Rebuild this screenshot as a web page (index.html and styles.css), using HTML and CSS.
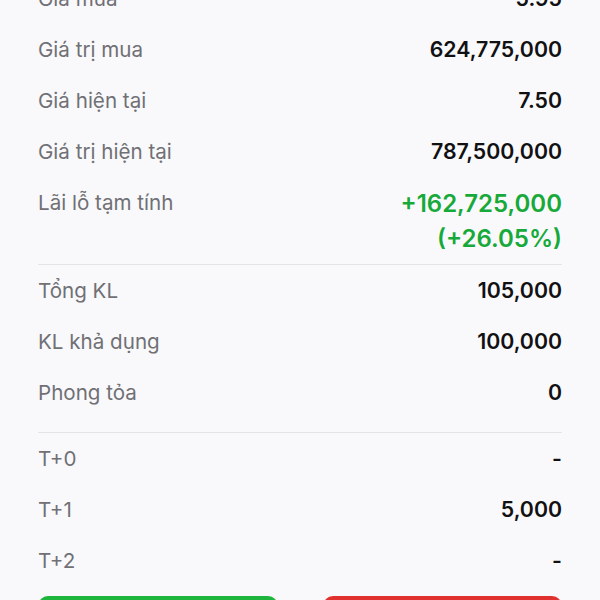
FILE: index.html
```html
<html>
  <head>
    <title>Chi tiết tài sản</title>
    <meta charset="utf-8" />
    <meta name="viewport" content="width=device-width" />
    <link rel="stylesheet" href="styles.css">
  </head>
  <body>
    <main class="detail">
      <section class="group group-top">
        <div class="row">
          <span class="label">Giá mua</span>
          <span class="value">5.95</span>
        </div>
        <div class="row">
          <span class="label">Giá trị mua</span>
          <span class="value">624,775,000</span>
        </div>
        <div class="row">
          <span class="label">Giá hiện tại</span>
          <span class="value">7.50</span>
        </div>
        <div class="row">
          <span class="label">Giá trị hiện tại</span>
          <span class="value">787,500,000</span>
        </div>
        <div class="row row-pnl">
          <span class="label">Lãi lỗ tạm tính</span>
          <span class="value value-up">+162,725,000<br />(+26.05%)</span>
        </div>
      </section>

      <hr class="divider" />

      <section class="group group-volume">
        <div class="row">
          <span class="label">Tổng KL</span>
          <span class="value">105,000</span>
        </div>
        <div class="row">
          <span class="label">KL khả dụng</span>
          <span class="value">100,000</span>
        </div>
        <div class="row">
          <span class="label">Phong tỏa</span>
          <span class="value">0</span>
        </div>
      </section>

      <hr class="divider" />

      <section class="group">
        <div class="row">
          <span class="label">T+0</span>
          <span class="value">-</span>
        </div>
        <div class="row">
          <span class="label">T+1</span>
          <span class="value">5,000</span>
        </div>
        <div class="row">
          <span class="label">T+2</span>
          <span class="value">-</span>
        </div>
      </section>

      <div class="actions">
        <button class="btn btn-buy">Mua</button>
        <button class="btn btn-sell">Bán</button>
      </div>
    </main>
  </body>
</html>
```

FILE: styles.css
```css
body {
  margin: 0;
  background: #f9f9fb;
  overflow: hidden;
}

body,
* {
  font-family: Inter, "Noto Sans", sans-serif;
}

.detail {
  padding: 0 38px;
}

.group-top {
  margin-top: -27px;
}

.group-volume {
  padding-bottom: 14px;
}

.row {
  display: flex;
  justify-content: space-between;
  align-items: flex-start;
  padding: 12px 0;
  font-size: 20.6px;
  line-height: 27px;
}

.label {
  color: #707075;
}

.value {
  color: #111113;
  font-size: 21.3px;
  font-weight: 600;
  text-align: right;
}

.row-pnl {
  padding-bottom: 8px;
}

.value-up {
  color: #17a93a;
  font-size: 24px;
  line-height: 35px;
  margin-top: -3px;
}

.divider {
  border: 0;
  border-top: 1px solid #e3e3e8;
  margin: 0;
}

.actions {
  display: flex;
  gap: 45px;
  margin-top: 10px;
}

.btn {
  flex: 1;
  height: 48px;
  border: 0;
  border-radius: 10px;
  color: #fff;
  font-size: 18px;
  font-weight: 600;
}

.btn-buy {
  background: #1db53c;
}

.btn-sell {
  background: #e0312f;
}
```
